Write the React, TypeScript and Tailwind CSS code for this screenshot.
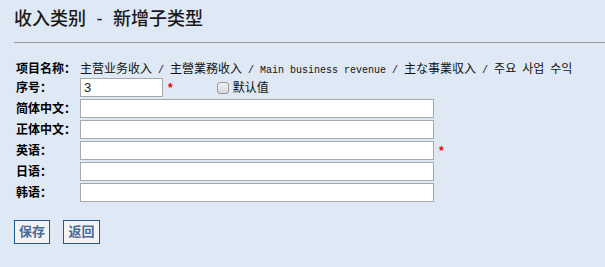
// 收入类别 - 新增子类型 form
const cjk = '"Liberation Sans", "Noto Sans CJK SC", sans-serif';

function Row({ label, children, h = "h-[21px]" }: { label: string; children?: React.ReactNode; h?: string }) {
  return (
    <div className={`flex items-center ${h}`}>
      <div className="w-[64px] shrink-0 text-[12px] font-bold text-black">{label}</div>
      {children}
    </div>
  );
}

function Field({ w = "w-[354px]", value = "" }: { w?: string; value?: string }) {
  return (
    <input
      readOnly
      value={value}
      className={`${w} h-[19px] border border-[#a9a9a9] bg-white px-[3px] text-[13px] text-[#222] outline-none`}
    />
  );
}

const Star = () => <span className="ml-[5px] text-[12px] font-bold leading-none text-[#e00]">*</span>;

export default function App() {
  const mono = "font-['Liberation_Mono',monospace] text-[10px]";
  return (
    <div className="min-h-[267px] w-[605px] bg-[#dfe9f5] pl-[14px] pt-[7px]" style={{ fontFamily: cjk }}>
      <h1 className="flex h-[24px] items-center text-[18px] font-medium leading-[24px] text-[#1a1a1a]">
        <span>收入类别</span>
        <span className="w-[27px] text-center">-</span>
        <span>新增子类型</span>
      </h1>
      <div className="mt-[11px] border-t border-[#9a9a9a]" />

      <div className="mt-[17px] pl-[2px]">
        <Row label="项目名称：" h="h-[17px]">
          <span className="whitespace-pre text-[12px] text-[#111]">
            主营业务收入<span className={mono}> / </span>主營業務收入<span className={mono}> / Main business revenue / </span>主な事業収入<span className={mono}> / </span>주요<span className={mono}> </span>사업<span className={mono}> </span>수익
          </span>
        </Row>
        <Row label="序号：">
          <Field w="w-[83px]" value="3" />
          <Star />
          <span className="ml-[44px] h-[12px] w-[12px] rounded-[3px] border border-[#9a9a9a] bg-gradient-to-b from-[#f4f4f4] to-[#d8d8d8]" />
          <span className="ml-[4px] text-[12px] text-[#111]">默认值</span>
        </Row>
        <Row label="简体中文："><Field /></Row>
        <Row label="正体中文："><Field /></Row>
        <Row label="英语："><Field /><Star /></Row>
        <Row label="日语："><Field /></Row>
        <Row label="韩语："><Field /></Row>
      </div>

      <div className="mt-[17px] flex gap-[13px]">
        <button className="h-[24px] w-[36px] border border-[#1d5a8e] bg-[#f3f3f3] text-[13px] font-bold text-[#4a6a9c]">保存</button>
        <button className="h-[24px] w-[37px] border border-[#1d5a8e] bg-[#f3f3f3] text-[13px] font-bold text-[#4a6a9c]">返回</button>
      </div>
    </div>
  );
}
